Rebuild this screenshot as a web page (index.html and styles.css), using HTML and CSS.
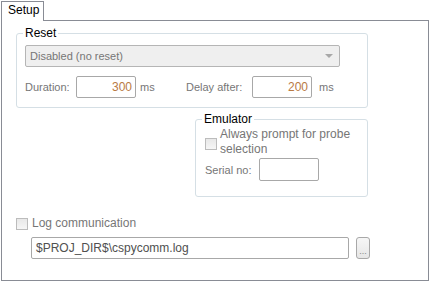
FILE: index.html
```html
<!DOCTYPE html>
<html lang="en">
<head>
  <meta charset="UTF-8">
  <title>Setup</title>
  <link rel="stylesheet" href="styles.css">
</head>
<body>
  <div class="tab-strip">
    <div class="tab">Setup</div>
  </div>

  <div class="panel">
    <fieldset class="group reset-group">
      <legend>Reset</legend>
      <div class="combo">
        <span>Disabled (no reset)</span>
        <span class="combo-arrow"></span>
      </div>
      <div class="field-row">
        <span class="lbl lbl-duration">Duration:</span>
        <span class="num-box">300</span>
        <span class="unit">ms</span>
        <span class="lbl lbl-delay">Delay after:</span>
        <span class="num-box">200</span>
        <span class="unit unit-last">ms</span>
      </div>
    </fieldset>

    <fieldset class="group emu-group">
      <legend>Emulator</legend>
      <div class="check-row">
        <span class="check"></span>
        <span class="check-text">Always prompt for probe<br>selection</span>
      </div>
      <div class="serial-row">
        <span class="lbl lbl-serial">Serial no:</span>
        <span class="serial-box"></span>
      </div>
    </fieldset>

    <div class="log-row">
      <span class="check"></span>
      <span class="check-text">Log communication</span>
    </div>
    <div class="path-row">
      <span class="path-box">$PROJ_DIR$\cspycomm.log</span>
      <span class="browse-btn">...</span>
    </div>
  </div>
</body>
</html>
```

FILE: styles.css
```css
body {
  margin: 0;
  background: #fff;
  font-family: 'Liberation Sans', Arial, sans-serif;
  font-size: 11px;
  color: #767676;
}

.tab-strip {
  display: flex;
  padding: 1px 0 0 1px;
  height: 20px;
  box-sizing: border-box;
}

.tab {
  width: 43px;
  height: 20px;
  box-sizing: border-box;
  border: 1px solid #898c95;
  border-bottom: none;
  background: #fff;
  color: #000;
  font-size: 12px;
  line-height: 17px;
  padding-left: 6px;
  position: relative;
  z-index: 1;
}

.panel {
  margin-left: 1px;
  width: 428px;
  height: 261px;
  box-sizing: border-box;
  border: 1px solid #898c95;
  display: flex;
  flex-direction: column;
}

.group {
  border: 1px solid #d5dfe5;
  border-radius: 3px;
  padding: 0;
  margin: 0;
  min-width: 0;
  box-sizing: border-box;
}

.group legend {
  margin-left: 6px;
  padding: 0 2px;
  color: #000;
  font-size: 12px;
  line-height: 14px;
}

.reset-group {
  margin: 5px 0 0 14px;
  width: 352px;
  height: 82px;
}

.combo {
  margin: 5px 0 0 8px;
  width: 315px;
  height: 22px;
  box-sizing: border-box;
  border: 1px solid #b5b5b5;
  border-radius: 2px;
  background: #efefef;
  display: flex;
  align-items: center;
  justify-content: space-between;
  padding: 0 6px 0 4px;
}

.combo-arrow {
  width: 0;
  height: 0;
  border-left: 4px solid transparent;
  border-right: 4px solid transparent;
  border-top: 4px solid #a8a8a8;
}

.field-row {
  display: flex;
  align-items: center;
  margin: 9px 0 0 8px;
  height: 22px;
}

.lbl-duration { width: 51px; }
.lbl-delay { width: 66px; }

.num-box {
  width: 60px;
  height: 22px;
  box-sizing: border-box;
  border: 1px solid #a8a8a8;
  border-radius: 2px;
  background: #fff;
  color: #b97a44;
  font-size: 12px;
  text-align: right;
  line-height: 20px;
  padding-right: 3px;
}

.unit {
  width: 46px;
  padding-left: 4px;
}

.unit-last { padding-left: 7px; }

.emu-group {
  margin: 4px 0 0 193px;
  width: 173px;
  height: 85px;
}

.check-row {
  display: flex;
  align-items: center;
  margin: 1px 0 0 9px;
}

.check {
  width: 12px;
  height: 12px;
  box-sizing: border-box;
  border: 1px solid #bcbcbc;
  background: linear-gradient(#e8e8e8, #f6f6f6);
  margin-top: 3px;
}

.check-text {
  padding-left: 3px;
  font-size: 12px;
  line-height: 15px;
}

.serial-row {
  display: flex;
  align-items: center;
  margin: 1px 0 0 9px;
}

.lbl-serial { width: 54px; }

.serial-box {
  width: 60px;
  height: 23px;
  box-sizing: border-box;
  border: 1px solid #a8a8a8;
  border-radius: 2px;
  background: #fff;
}

.log-row {
  display: flex;
  align-items: center;
  margin: 19px 0 0 14px;
}

.log-row .check { margin-top: 0; }

.log-row .check-text { padding-left: 4px; }

.path-row {
  display: flex;
  margin: 6px 0 0 29px;
}

.path-box {
  width: 318px;
  height: 22px;
  box-sizing: border-box;
  border: 1px solid #a8a8a8;
  border-radius: 2px;
  background: #fff;
  color: #505050;
  font-size: 12px;
  line-height: 20px;
  padding-left: 4px;
}

.browse-btn {
  margin-left: 7px;
  width: 14px;
  height: 22px;
  box-sizing: border-box;
  border: 1px solid #a8a8a8;
  border-radius: 3px;
  background: linear-gradient(#f6f6f6, #e6e6e6);
  font-size: 9px;
  line-height: 26px;
  text-align: center;
  color: #888;
}
```
